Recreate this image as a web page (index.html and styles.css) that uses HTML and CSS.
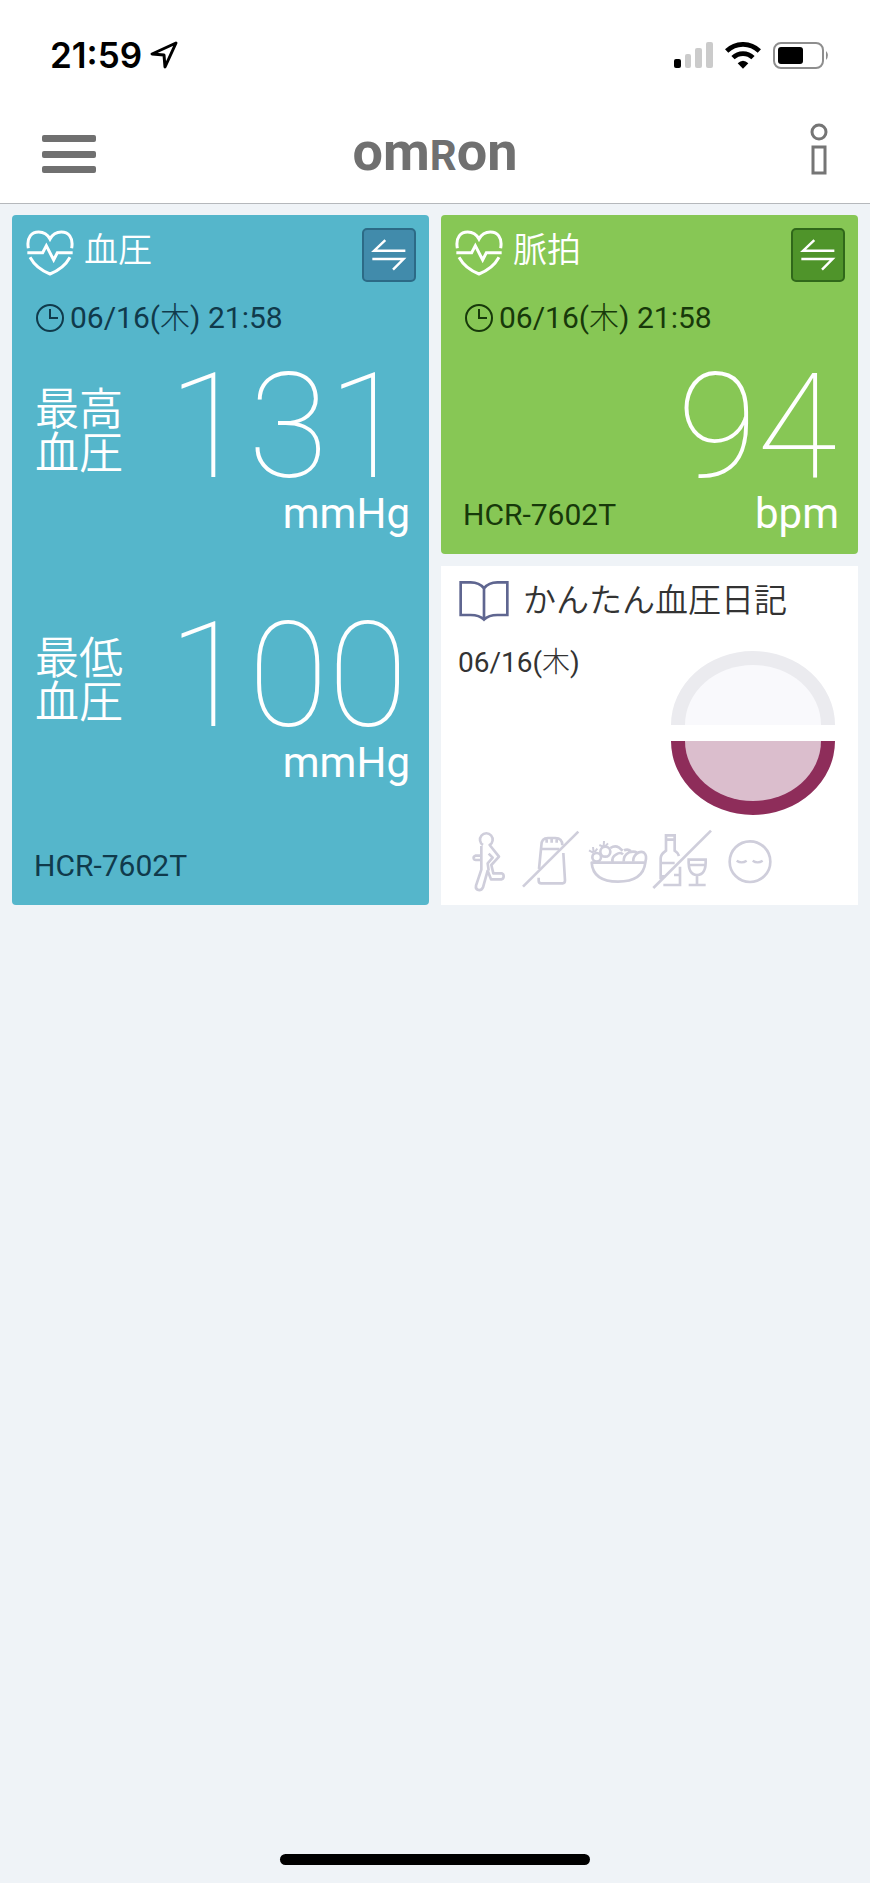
FILE: index.html
```html
<!DOCTYPE html>
<html lang="ja">
<head>
    <meta charset="UTF-8">
    <meta name="viewport" content="width=device-width, initial-scale=1.0">
    <title>OMRON connect</title>
    <link rel="stylesheet" href="styles.css">
</head>
<body>
    <!-- Shared icons -->
    <svg class="defs" width="0" height="0" aria-hidden="true">
        <symbol id="icon-heart" viewBox="0 0 144 138">
            <g fill="none" stroke="#fff" stroke-width="9">
                <path d="M7 55C1 20 18 6 38 6c16 0 27 8 34 21C79 14 90 6 106 6c20 0 37 14 31 49"/>
                <path d="M4 68h46l11-21 22 43 11-22h46"/>
                <path d="M12 82c12 22 34 40 60 50 26-10 48-28 60-50"/>
            </g>
        </symbol>
        <symbol id="icon-clock" viewBox="0 0 28 28">
            <g fill="none" stroke="currentColor" stroke-width="2">
                <circle cx="14" cy="14" r="13"/>
                <path d="M14 5v9h8"/>
            </g>
        </symbol>
        <symbol id="icon-swap" viewBox="0 0 162 162">
            <path d="M69 33 33 67h101M27 94h101l-34 34" fill="none" stroke="#fff" stroke-width="8"/>
        </symbol>
    </svg>

    <!-- Status bar -->
    <div class="status-bar">
        <div class="status-left">
            <span class="time">21:59</span>
            <svg width="28" height="28" viewBox="0 0 28 28" aria-hidden="true">
                <path d="M26 2 2 13l12 1 1 12z" fill="none" stroke="#000" stroke-width="3" stroke-linejoin="round"/>
            </svg>
        </div>
        <div class="status-right">
            <svg width="39" height="27" viewBox="0 0 39 27" aria-hidden="true">
                <rect x="0" y="17" width="7" height="9" rx="2"/>
                <g fill="#cbcbcb">
                    <rect x="11" y="12" width="6" height="14" rx="2"/>
                    <rect x="21" y="6" width="7" height="20" rx="2"/>
                    <rect x="32" y="0" width="7" height="26" rx="2"/>
                </g>
            </svg>
            <svg width="36" height="27" viewBox="0 0 108 81" aria-hidden="true">
                <path d="M5 27a70 70 0 0 1 98 0" fill="none" stroke="#000" stroke-width="14"/>
                <path d="M24 47a43 43 0 0 1 60 0" fill="none" stroke="#000" stroke-width="14"/>
                <path d="M54 80 38 64q16-15 32 0z"/>
            </svg>
            <svg width="57" height="27" viewBox="0 0 57 27" aria-hidden="true">
                <rect x="1" y="1" width="49" height="25" rx="7" fill="none" stroke="#8e8e8e" stroke-width="2"/>
                <rect x="5" y="5" width="25" height="17" rx="3"/>
                <path d="M53 9q4 4 0 9z" fill="#8e8e8e"/>
            </svg>
        </div>
    </div>

    <!-- Header -->
    <header class="header">
        <button type="button" class="icon-button" aria-label="メニュー">
            <svg width="54" height="38" viewBox="0 0 54 38">
                <g fill="#707070">
                    <rect width="54" height="7" rx="2"/>
                    <rect y="16" width="54" height="7" rx="2"/>
                    <rect y="31" width="54" height="7" rx="2"/>
                </g>
            </svg>
        </button>
        <h1 class="logo">om<span class="logo-cap">R</span>on</h1>
        <button type="button" class="icon-button info" aria-label="情報">
            <svg width="18" height="52" viewBox="0 0 18 52">
                <g fill="none" stroke="#757575" stroke-width="3">
                    <circle cx="9" cy="9" r="7"/>
                    <rect x="3" y="24" width="12" height="26"/>
                </g>
            </svg>
        </button>
    </header>

    <main class="dashboard">
        <!-- Blood pressure -->
        <section class="card card-pressure">
            <div class="card-header">
                <svg class="heart" aria-hidden="true"><use href="#icon-heart"/></svg>
                <h2>血圧</h2>
                <button type="button" class="swap" aria-label="血圧の表示切替"><svg><use href="#icon-swap"/></svg></button>
            </div>
            <div class="measured">
                <svg aria-hidden="true"><use href="#icon-clock"/></svg>
                <p>06/16(<span class="day">木</span>) 21:58</p>
            </div>
            <div class="reading">
                <span class="label">最高<br>血圧</span>
                <span class="value">131</span>
            </div>
            <p class="unit">mmHg</p>
            <div class="reading second">
                <span class="label">最低<br>血圧</span>
                <span class="value">100</span>
            </div>
            <p class="unit">mmHg</p>
            <div class="card-footer">
                <span class="device">HCR-7602T</span>
            </div>
        </section>

        <!-- Pulse -->
        <section class="card card-pulse">
            <div class="card-header">
                <svg class="heart" aria-hidden="true"><use href="#icon-heart"/></svg>
                <h2>脈拍</h2>
                <button type="button" class="swap" aria-label="脈拍の表示切替"><svg><use href="#icon-swap"/></svg></button>
            </div>
            <div class="measured">
                <svg aria-hidden="true"><use href="#icon-clock"/></svg>
                <p>06/16(<span class="day">木</span>) 21:58</p>
            </div>
            <div class="reading">
                <span class="value">94</span>
            </div>
            <div class="card-footer">
                <span class="device">HCR-7602T</span>
                <span class="unit">bpm</span>
            </div>
        </section>

        <!-- Diary -->
        <section class="card card-diary">
            <div class="diary-header">
                <svg width="50" height="42" viewBox="0 0 150 126" aria-hidden="true">
                    <path d="M5 7h30q26 0 40 18Q89 7 115 7h30v98h-30q-26 0-40 14-14-14-40-14H5zM75 25v92" fill="none" stroke="#5f6690" stroke-width="8"/>
                </svg>
                <h2>かんたん血圧日記</h2>
            </div>
            <div class="diary-body">
                <p class="diary-date">06/16(<span class="day">木</span>)</p>
                <svg width="164" height="164" viewBox="0 0 164 164" aria-hidden="true">
                    <path d="M0 74a82 74 0 0 1 164 0z" fill="#ebebef"/>
                    <path d="M14 74a68 60 0 0 1 136 0z" fill="#f9f9fc"/>
                    <path d="M0 90a82 74 0 0 0 164 0z" fill="#8e2d5a"/>
                    <path d="M14 90a68 60 0 0 0 136 0z" fill="#dbbecd"/>
                </svg>
            </div>
            <div class="habits">
                <!-- exercise -->
                <svg width="45" height="70" viewBox="60 30 135 210" aria-hidden="true">
                    <path d="M99 90a19 19 0 1 1 20 0l28 35-23 25 6 25h25q6 2 6 9t-6 9h-32l-10-26-14 50q-5 10-14 8-9-3-7-13l16-48V93M96 122H76q-6 2-5 8 1 5 6 5h19M116 116l12 12-15 17 3 22" fill="none" stroke="#cfcedb" stroke-width="8" stroke-linejoin="round"/>
                </svg>
                <!-- salt -->
                <svg width="69" height="70" viewBox="195 30 207 210" aria-hidden="true">
                    <g fill="none" stroke="#cfcedb" stroke-width="8">
                        <path d="M267 162l7-70q0-23 20-23h22q21 0 21 22M274 102h54M340 114l5 82q0 9-7 9h-64q-8 0-8-8v-9M290 70v13M305 70v13M320 70v13" stroke-linejoin="round"/>
                        <path d="M219 215 385 50"/>
                    </g>
                </svg>
                <!-- vegetables -->
                <svg width="66" height="70" viewBox="402 30 198 210" aria-hidden="true">
                    <g fill="none" stroke="#cfcedb" stroke-width="8">
                        <path d="M425 143h161q-7 57-82 57t-79-57z" stroke-linejoin="round"/>
                        <circle cx="440" cy="127" r="13"/>
                        <circle cx="466" cy="110" r="15"/>
                        <path d="M431 114l-14-8M431 113l-2-17M434 111l8-10M459 95l-11-5M461 94l1-16M465 94l9-9" stroke-width="6"/>
                        <path d="M481 99q14-9 25-2l12 10M488 141q-4-15 11-23 12-8 20 0M522 106q12-5 20 2M521 140q-1-19 16-28 15-5 24 1M550 140q-2-13 9-23 12-10 23-4 10 8 4 28"/>
                    </g>
                </svg>
                <!-- alcohol -->
                <svg width="70" height="70" viewBox="600 30 210 210" aria-hidden="true">
                    <g fill="none" stroke="#cfcedb" stroke-width="8">
                        <path d="M632 193v-63q0-12 16-23V61h26v46q10 6 13 16M648 74h26M632 144h42M632 184h14M672 180h18v30h-50M690 155v25"/>
                        <path d="M716 134h51q2 46-26 46-27 0-25-46zM718 150h48M741 180v29M716 210h51"/>
                        <path d="M610 219 783 47"/>
                    </g>
                </svg>
                <!-- sleep -->
                <svg width="60" height="70" viewBox="810 30 180 210" aria-hidden="true">
                    <g fill="none" stroke="#cfcedb" stroke-width="8">
                        <circle cx="900" cy="140" r="61"/>
                        <path d="M860 137q15 10 30 0M908 137q15 10 30 0" stroke-width="7"/>
                    </g>
                </svg>
            </div>
        </section>
    </main>

    <div class="home-indicator"></div>
</body>
</html>
```
FILE: styles.css
```css
* {
    box-sizing: border-box;
}

body {
    margin: 0;
    min-height: 100vh;
    display: flex;
    flex-direction: column;
    font-family: Roboto, "Noto Sans CJK JP", sans-serif;
    background-color: #eff3f7;
    color: #333;
}

h1, h2, p {
    margin: 0;
}

svg {
    display: block;
    flex: none;
}

button {
    padding: 0;
    border: none;
    background: none;
    cursor: pointer;
}

.defs {
    position: absolute;
}

/* Status bar */
.status-bar {
    display: flex;
    justify-content: space-between;
    align-items: center;
    height: 104px;
    padding: 6px 40px 0 50px;
    background-color: #fff;
    color: #000;
}

.status-left,
.status-right {
    display: flex;
    align-items: center;
}

.status-left {
    gap: 8px;
}

.status-right {
    gap: 12px;
}

.time {
    font-family: Inter, sans-serif;
    font-size: 35px;
    font-weight: 600;
}

/* Header */
.header {
    display: flex;
    justify-content: space-between;
    align-items: center;
    height: 100px;
    padding: 0 42px;
    background-color: #fff;
    border-bottom: 1px solid #b5b8bc;
}

.icon-button {
    width: 54px;
}

.info svg {
    margin: 0 0 10px auto;
}

.logo {
    color: #707070;
    font-size: 54px;
    font-weight: 700;
    line-height: 60px;
}

.logo-cap {
    font-size: 42px;
}

/* Cards */
.dashboard {
    display: grid;
    grid-template-columns: 1fr 1fr;
    grid-auto-rows: minmax(339px, auto);
    gap: 12px;
    padding: 11px 12px;
}

.card {
    display: flex;
    flex-direction: column;
    border-radius: 4px;
}

.card h2 {
    font-family: "Noto Sans CJK JP", sans-serif;
    font-size: 34px;
    font-weight: 350;
    line-height: 40px;
}

.card-pressure {
    grid-row: span 2;
    background-color: #55b6cb;
    color: #103a4b;
}

.card-pulse {
    background-color: #87c755;
    color: #17390a;
}

.card-header {
    display: flex;
    align-items: flex-start;
    gap: 10px;
    padding: 13px 13px 0 14px;
    color: #fff;
}

.heart {
    width: 48px;
    height: 46px;
    margin-top: 2px;
}

.swap {
    width: 54px;
    height: 54px;
    margin-left: auto;
    border: 2px solid;
    border-radius: 5px;
}

.swap svg {
    width: 50px;
    height: 50px;
}

.card-pressure .swap {
    background-color: #418bab;
    border-color: #2c6a86;
}

.card-pulse .swap {
    background-color: #4f942a;
    border-color: #30681a;
}

.measured {
    display: flex;
    align-items: center;
    gap: 6px;
    height: 36px;
    margin-top: 18px;
    padding-left: 24px;
    font-size: 30px;
    line-height: 36px;
}

.measured svg {
    width: 28px;
    height: 28px;
}

.day {
    font-weight: 300;
}

.reading {
    display: flex;
    align-items: center;
    height: 124px;
    margin-top: 30px;
    padding: 0 21px 0 23px;
    color: #fff;
}

.second {
    margin-top: 77px;
}

.label {
    font-family: "Noto Sans CJK JP", sans-serif;
    font-size: 44px;
    font-weight: 350;
    line-height: 44px;
}

.value {
    margin-left: auto;
    font-size: 146px;
    font-weight: 100;
    line-height: 124px;
}

.unit {
    padding-right: 19px;
    color: #fff;
    font-size: 42px;
    line-height: 48px;
    text-align: right;
}

.card-footer {
    display: flex;
    justify-content: space-between;
    align-items: center;
    height: 48px;
    margin: auto 0 16px;
    padding-left: 22px;
    font-size: 30px;
}

/* Diary */
.card-diary {
    border-radius: 0;
    background-color: #fff;
}

.diary-header {
    display: flex;
    align-items: flex-start;
    gap: 14px;
    height: 56px;
    padding: 14px 18px 0;
}

.card-diary h2 {
    font-size: 33px;
    line-height: 36px;
}

.diary-body {
    display: flex;
    justify-content: space-between;
    padding: 29px 23px 0 17px;
}

.diary-date {
    font-size: 28px;
    line-height: 24px;
}

.habits {
    display: flex;
    margin-top: 10px;
    padding-left: 29px;
}

.home-indicator {
    width: 310px;
    max-width: 60%;
    height: 11px;
    margin: auto auto 18px;
    border-radius: 6px;
    background-color: #000;
}
```
